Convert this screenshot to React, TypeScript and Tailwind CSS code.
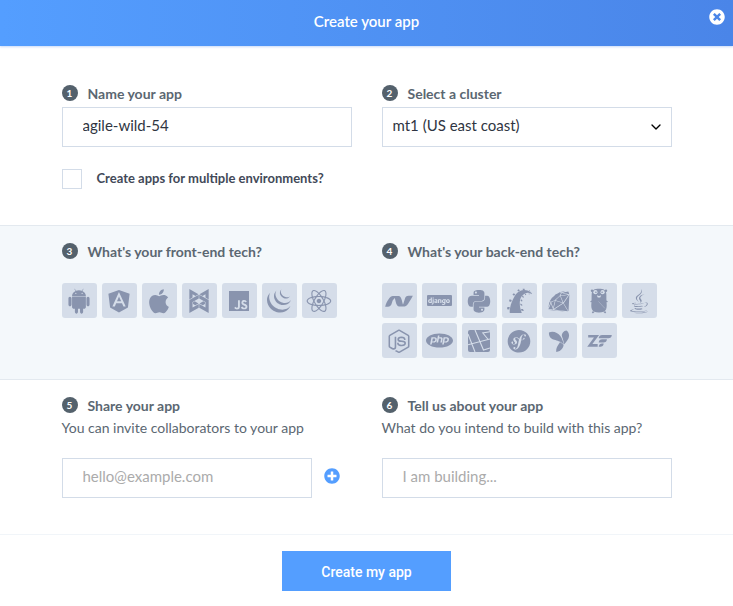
import { useState } from "react";
import type { ReactNode } from "react";
import {
  DiAndroid,
  DiAngularSimple,
  DiApple,
  DiDjango,
  DiDotnet,
  DiJava,
  DiNodejsSmall,
  DiPython,
  DiReact,
  DiRor,
  DiRuby,
  DiSymfonyBadge,
  DiYii,
  DiZend,
} from "react-icons/di";
import { FaPlusCircle, FaTimesCircle } from "react-icons/fa";
import { SiBackbonedotjs, SiJavascript, SiJquery, SiPhp } from "react-icons/si";
import { ChevronDown } from "lucide-react";

type Tech = { name: string; icon: ReactNode };

function DjangoBadge() {
  return (
    <span className="flex h-[11px] w-[25px] items-center justify-center overflow-hidden rounded-[1px] bg-[#8994ae] text-[#d5dde9]">
      <DiDjango className="size-[22px] shrink-0" />
    </span>
  );
}

function Gopher() {
  return (
    <svg viewBox="0 0 20 26" className="h-[26px] w-5" fill="currentColor" aria-hidden="true">
      <circle cx="3" cy="2.800" r="1.200" />
      <circle cx="17" cy="2.800" r="1.200" />
      <path d="M10 .8c4.600 0 7 1.200 7.300 5 .2 2.800 0 4.600.2 7.600.2 3.200.5 5.400-.4 7.800-.9 2.400-3.300 3.300-7.100 3.300s-6.200-.9-7.100-3.300c-.9-2.400-.6-4.600-.4-7.800.2-3 0-4.800.2-7.600C3 2 5.400.8 10 .8z" />
      <path d="M3 12.500l-1.800.8.5.9 1.300-.3zM17 12.500l1.800.8-.5.9-1.300-.3zM3.800 23l-1 2 1.300.3 1.400-1.300zM16.200 23l1 2-1.300.3-1.400-1.300z" />
      <circle cx="6.400" cy="4.200" r="2.100" fill="#d5dde9" />
      <circle cx="13.600" cy="4.200" r="2.100" fill="#d5dde9" />
      <circle cx="6.900" cy="4.200" r=".8" />
      <circle cx="13.100" cy="4.200" r=".8" />
      <path d="M7.800 7.400h4.400l-1 2.200H8.800z" fill="#d5dde9" />
      <circle cx="10" cy="6.900" r="1" />
      <path d="M9.500 13.500l6.500 7" stroke="#d5dde9" strokeWidth=".5" opacity=".7" />
    </svg>
  );
}

function LaravelTile() {
  return (
    <svg viewBox="0 0 22 22" className="size-[22px]" fill="none" aria-hidden="true">
      <rect width="22" height="22" rx="2" fill="currentColor" />
      <path
        d="M0 4L7 22M0 14.700L22 9M7 0l8.500 20L22 18M22 1.800L14.800 3l5.400 6.500"
        stroke="#d5dde9"
        strokeWidth="1.100"
      />
    </svg>
  );
}

const frontEnd: Tech[] = [
  { name: "Android", icon: <DiAndroid className="size-[26px]" /> },
  { name: "Angular", icon: <DiAngularSimple className="size-[30px]" /> },
  { name: "iOS", icon: <DiApple className="size-[30px]" /> },
  { name: "Backbone", icon: <SiBackbonedotjs className="size-6" /> },
  { name: "JavaScript", icon: <SiJavascript className="size-5" /> },
  { name: "jQuery", icon: <SiJquery className="size-6" /> },
  { name: "React", icon: <DiReact className="size-8" /> },
];

const backEnd: Tech[] = [
  { name: ".NET", icon: <DiDotnet className="size-[30px]" /> },
  { name: "Django", icon: <DjangoBadge /> },
  { name: "Python", icon: <DiPython className="size-8" /> },
  { name: "Rails", icon: <DiRor className="size-[35px]" /> },
  { name: "Ruby", icon: <DiRuby className="size-6" /> },
  { name: "Go", icon: <Gopher /> },
  { name: "Java", icon: <DiJava className="size-[30px]" /> },
  { name: "Node.js", icon: <DiNodejsSmall className="size-[30px]" /> },
  { name: "PHP", icon: <SiPhp className="size-[27px]" /> },
  { name: "Laravel", icon: <LaravelTile /> },
  { name: "Symfony", icon: <DiSymfonyBadge className="size-8" /> },
  { name: "Yii", icon: <DiYii className="size-[22px]" /> },
  { name: "Zend Framework", icon: <DiZend className="size-[35px]" /> },
];

function Step({ number, children }: { number: number; children: ReactNode }) {
  return (
    <span className="flex h-4 items-center gap-[10px] text-[14px] font-bold text-[#5b6772]">
      <span className="flex size-4 items-center justify-center rounded-full bg-[#54616c] text-[10px] leading-4 text-white">
        {number}
      </span>
      {children}
    </span>
  );
}

function TechPicker({ step, title, items }: { step: number; title: string; items: Tech[] }) {
  const [selected, setSelected] = useState<string[]>([]);
  const toggle = (name: string) =>
    setSelected((now) => (now.includes(name) ? now.filter((n) => n !== name) : [...now, name]));

  return (
    <section>
      <h2>
        <Step number={step}>{title}</Step>
      </h2>
      <div className="mt-6 flex flex-wrap gap-[5px]">
        {items.map(({ name, icon }) => (
          <button
            key={name}
            type="button"
            aria-label={name}
            aria-pressed={selected.includes(name)}
            onClick={() => toggle(name)}
            className="flex size-[35px] items-center justify-center rounded-[3px] bg-[#d5dde9] text-[#8994ae] aria-pressed:bg-[#549eff] aria-pressed:text-white"
          >
            {icon}
          </button>
        ))}
      </div>
    </section>
  );
}

const columns = "mx-auto grid max-w-[610px] grid-cols-2 gap-x-[30px]";
const field =
  "h-10 w-full min-w-0 rounded-none border border-[#d3dce8] bg-white pb-1 text-[15px] text-[#2f3542] outline-none placeholder:text-[#ababab] focus:border-[#549eff]";

export default function App() {
  return (
    <form className="bg-white font-['Lato','Liberation_Sans',sans-serif]" onSubmit={(e) => e.preventDefault()}>
      <header className="relative flex h-[46px] items-center justify-center bg-linear-to-r from-[#549eff] to-[#4a85e8] shadow-[0_1px_2px_rgba(74,133,232,0.3)]">
        <h1 className="pb-[3px] text-[15px] font-semibold text-white">Create your app</h1>
        <button type="button" aria-label="Close" className="absolute top-[9px] right-2 text-white">
          <FaTimesCircle className="size-4" />
        </button>
      </header>

      <div className={`${columns} pt-[39px] pb-9`}>
        <div>
          <label htmlFor="name">
            <Step number={1}>Name your app</Step>
          </label>
          <input id="name" type="text" defaultValue="agile-wild-54" className={`${field} mt-[6px] px-5`} />
          <label className="mt-[22px] flex items-center gap-[15px] text-[13px] font-bold text-[#424958]">
            <input
              type="checkbox"
              className="size-5 appearance-none border border-[#d3dce8] bg-white checked:bg-[#549eff]"
            />
            Create apps for multiple environments?
          </label>
        </div>
        <div>
          <label htmlFor="cluster">
            <Step number={2}>Select a cluster</Step>
          </label>
          <div className="relative mt-[6px]">
            <select id="cluster" className={`${field} appearance-none pr-8 pl-[10px]`}>
              <option>mt1 (US east coast)</option>
            </select>
            <ChevronDown className="pointer-events-none absolute top-3 right-2 size-4 text-black" />
          </div>
        </div>
      </div>

      <div className="border-y border-[#e3e9ef] bg-[#f4f8fb] pt-[17px] pb-[21px]">
        <div className={columns}>
          <TechPicker step={3} title="What's your front-end tech?" items={frontEnd} />
          <TechPicker step={4} title="What's your back-end tech?" items={backEnd} />
        </div>
      </div>

      <div className={`${columns} pt-[17px] pb-9`}>
        <div>
          <label htmlFor="email">
            <Step number={5}>Share your app</Step>
          </label>
          <p className="mt-[5px] text-[14px] leading-5 text-[#5b6772]">You can invite collaborators to your app</p>
          <div className="mt-5 flex items-center gap-3">
            <input id="email" type="email" placeholder="hello@example.com" className={`${field} max-w-[250px] px-5`} />
            <button type="button" aria-label="Add collaborator" className="mb-1 text-[#549eff]">
              <FaPlusCircle className="size-4" />
            </button>
          </div>
        </div>
        <div>
          <label htmlFor="about">
            <Step number={6}>Tell us about your app</Step>
          </label>
          <p className="mt-[5px] text-[14px] leading-5 text-[#5b6772]">What do you intend to build with this app?</p>
          <input id="about" type="text" placeholder="I am building..." className={`${field} mt-5 px-5`} />
        </div>
      </div>

      <footer className="flex justify-center border-t border-[#f1f5f9] pt-4 pb-[15px]">
        <button
          type="submit"
          className="h-10 w-[169px] bg-[#549eff] pt-[3px] font-['Roboto',sans-serif] text-[14px] font-medium text-white"
        >
          Create my app
        </button>
      </footer>
    </form>
  );
}
